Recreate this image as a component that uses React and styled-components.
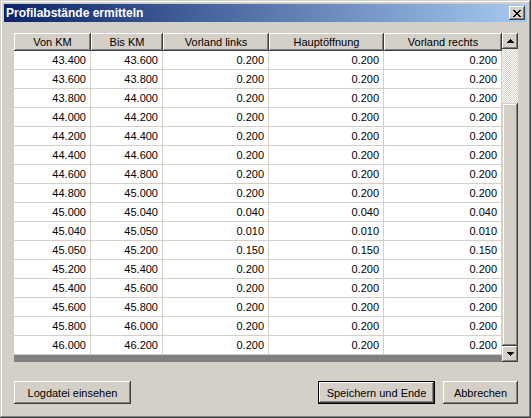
import styled, { createGlobalStyle } from "styled-components";

const GlobalStyle = createGlobalStyle`
	html, body {
		margin: 0;
		padding: 0;
		background: #d4d0c8;
	}
	* {
		box-sizing: border-box;
	}
`;

const rows = [
	["43.400", "43.600", "0.200", "0.200", "0.200"],
	["43.600", "43.800", "0.200", "0.200", "0.200"],
	["43.800", "44.000", "0.200", "0.200", "0.200"],
	["44.000", "44.200", "0.200", "0.200", "0.200"],
	["44.200", "44.400", "0.200", "0.200", "0.200"],
	["44.400", "44.600", "0.200", "0.200", "0.200"],
	["44.600", "44.800", "0.200", "0.200", "0.200"],
	["44.800", "45.000", "0.200", "0.200", "0.200"],
	["45.000", "45.040", "0.040", "0.040", "0.040"],
	["45.040", "45.050", "0.010", "0.010", "0.010"],
	["45.050", "45.200", "0.150", "0.150", "0.150"],
	["45.200", "45.400", "0.200", "0.200", "0.200"],
	["45.400", "45.600", "0.200", "0.200", "0.200"],
	["45.600", "45.800", "0.200", "0.200", "0.200"],
	["45.800", "46.000", "0.200", "0.200", "0.200"],
	["46.000", "46.200", "0.200", "0.200", "0.200"],
];

const headers = ["Von KM", "Bis KM", "Vorland links", "Hauptöffnung", "Vorland rechts"];

const raised = `
	box-shadow: inset -1px -1px #404040, inset 1px 1px #ffffff,
		inset -2px -2px #808080, inset 2px 2px #d4d0c8;
`;

const ArrowIcon = ({ down }) => (
	<svg width="7" height="4" viewBox="0 0 7 4" shapeRendering="crispEdges">
		<path
			d="M3 0h1v1h1v1h1v1h1v1H0V3h1V2h1V1h1z"
			fill="#000"
			transform={down ? "rotate(180 3.5 2)" : undefined}
		/>
	</svg>
);

const CloseIcon = () => (
	<svg width="8" height="7" viewBox="0 0 8 7" shapeRendering="crispEdges">
		<g fill="#000">
			<rect x="0" y="0" width="2" height="1" />
			<rect x="6" y="0" width="2" height="1" />
			<rect x="1" y="1" width="2" height="1" />
			<rect x="5" y="1" width="2" height="1" />
			<rect x="2" y="2" width="4" height="1" />
			<rect x="3" y="3" width="2" height="1" />
			<rect x="2" y="4" width="4" height="1" />
			<rect x="1" y="5" width="2" height="1" />
			<rect x="5" y="5" width="2" height="1" />
			<rect x="0" y="6" width="2" height="1" />
			<rect x="6" y="6" width="2" height="1" />
		</g>
	</svg>
);

export default function App() {
	return (
		<>
			<GlobalStyle />
			<Window>
				<TitleBar>
					<Title>Profilabstände ermitteln</Title>
					<CloseButton>
						<CloseIcon />
					</CloseButton>
				</TitleBar>
				<Content>
					<GridBox>
						<Table>
							<HeaderRow>
								{headers.map((h) => (
									<HeaderCell key={h}>{h}</HeaderCell>
								))}
							</HeaderRow>
							{rows.map((r, i) => (
								<Row key={i}>
									{r.map((v, j) => (
										<Cell key={j}>{v}</Cell>
									))}
								</Row>
							))}
							<Filler />
						</Table>
						<ScrollBar>
							<ScrollButton>
								<ArrowIcon />
							</ScrollButton>
							<Track>
								<TrackSpace />
								<Thumb />
							</Track>
							<ScrollButton>
								<ArrowIcon down />
							</ScrollButton>
						</ScrollBar>
					</GridBox>
					<ButtonRow>
						<Button>Logdatei einsehen</Button>
						<ButtonGroup>
							<Button $default $width={117}>
								Speichern und Ende
							</Button>
							<Button $width={75}>Abbrechen</Button>
						</ButtonGroup>
					</ButtonRow>
				</Content>
			</Window>
		</>
	);
}

const Window = styled.div`
	width: 531px;
	height: 418px;
	padding: 4px;
	display: flex;
	flex-direction: column;
	background: #d4d0c8;
	box-shadow: inset -1px -1px #404040, inset 1px 1px #d4d0c8,
		inset -2px -2px #808080, inset 2px 2px #ffffff;
	font-family: "Liberation Sans", Arial, sans-serif;
	font-size: 11px;
	color: #000;
`;

const TitleBar = styled.div`
	height: 18px;
	display: flex;
	align-items: center;
	justify-content: space-between;
	padding: 0 2px 0 2px;
	background: linear-gradient(to right, #0a246a, #a6caf0);
`;

const Title = styled.div`
	color: #fff;
	font-weight: 700;
	font-size: 12px;
	white-space: nowrap;
`;

const CloseButton = styled.div`
	width: 16px;
	height: 14px;
	display: flex;
	align-items: center;
	justify-content: center;
	background: #d4d0c8;
	${raised}
`;

const Content = styled.div`
	flex: 1;
	display: flex;
	flex-direction: column;
	padding: 11px 9px 10px 10px;
`;

const GridBox = styled.div`
	height: 329px;
	display: flex;
`;

const Table = styled.div`
	width: 488px;
	display: flex;
	flex-direction: column;
	background: #fff;
`;

const columns = "77px 72px 106px 115px 118px";

const HeaderRow = styled.div`
	display: grid;
	grid-template-columns: ${columns};
	height: 18px;
`;

const HeaderCell = styled.div`
	display: flex;
	align-items: center;
	justify-content: center;
	background: #d4d0c8;
	white-space: nowrap;
	${raised}
`;

const Row = styled.div`
	display: grid;
	grid-template-columns: ${columns};
	height: 19px;
`;

const Cell = styled.div`
	display: flex;
	align-items: center;
	justify-content: flex-end;
	padding-right: 4px;
	border-right: 1px solid #d4d0c8;
	border-bottom: 1px solid #d4d0c8;
	background: #fff;
`;

const Filler = styled.div`
	flex: 1;
	background: #808080;
`;

const ScrollBar = styled.div`
	width: 16px;
	display: flex;
	flex-direction: column;
`;

const ScrollButton = styled.div`
	height: 16px;
	display: flex;
	align-items: center;
	justify-content: center;
	background: #d4d0c8;
	${raised}
`;

const Track = styled.div`
	flex: 1;
	display: flex;
	flex-direction: column;
	background-image: conic-gradient(
		#ffffff 25%,
		#d4d0c8 0 50%,
		#ffffff 0 75%,
		#d4d0c8 0
	);
	background-size: 2px 2px;
`;

const TrackSpace = styled.div`
	flex: 1;
`;

const Thumb = styled.div`
	height: 243px;
	background: #d4d0c8;
	box-shadow: inset -1px -1px #404040, inset 1px 1px #d4d0c8,
		inset -2px -2px #808080, inset 2px 2px #ffffff;
`;

const ButtonRow = styled.div`
	margin-top: 19px;
	display: flex;
	justify-content: space-between;
	align-items: center;
`;

const ButtonGroup = styled.div`
	display: flex;
	gap: 8px;
`;

const Button = styled.button`
	width: ${(p) => p.$width || 117}px;
	height: 23px;
	padding: 0;
	border: none;
	background: #d4d0c8;
	font-family: "Liberation Sans", Arial, sans-serif;
	font-size: 11px;
	color: #000;
	box-shadow: ${(p) =>
		p.$default
			? "inset 0 0 0 1px #000, inset -2px -2px #404040, inset 2px 2px #ffffff, inset -3px -3px #808080"
			: "inset -1px -1px #404040, inset 1px 1px #ffffff, inset -2px -2px #808080"};
`;
